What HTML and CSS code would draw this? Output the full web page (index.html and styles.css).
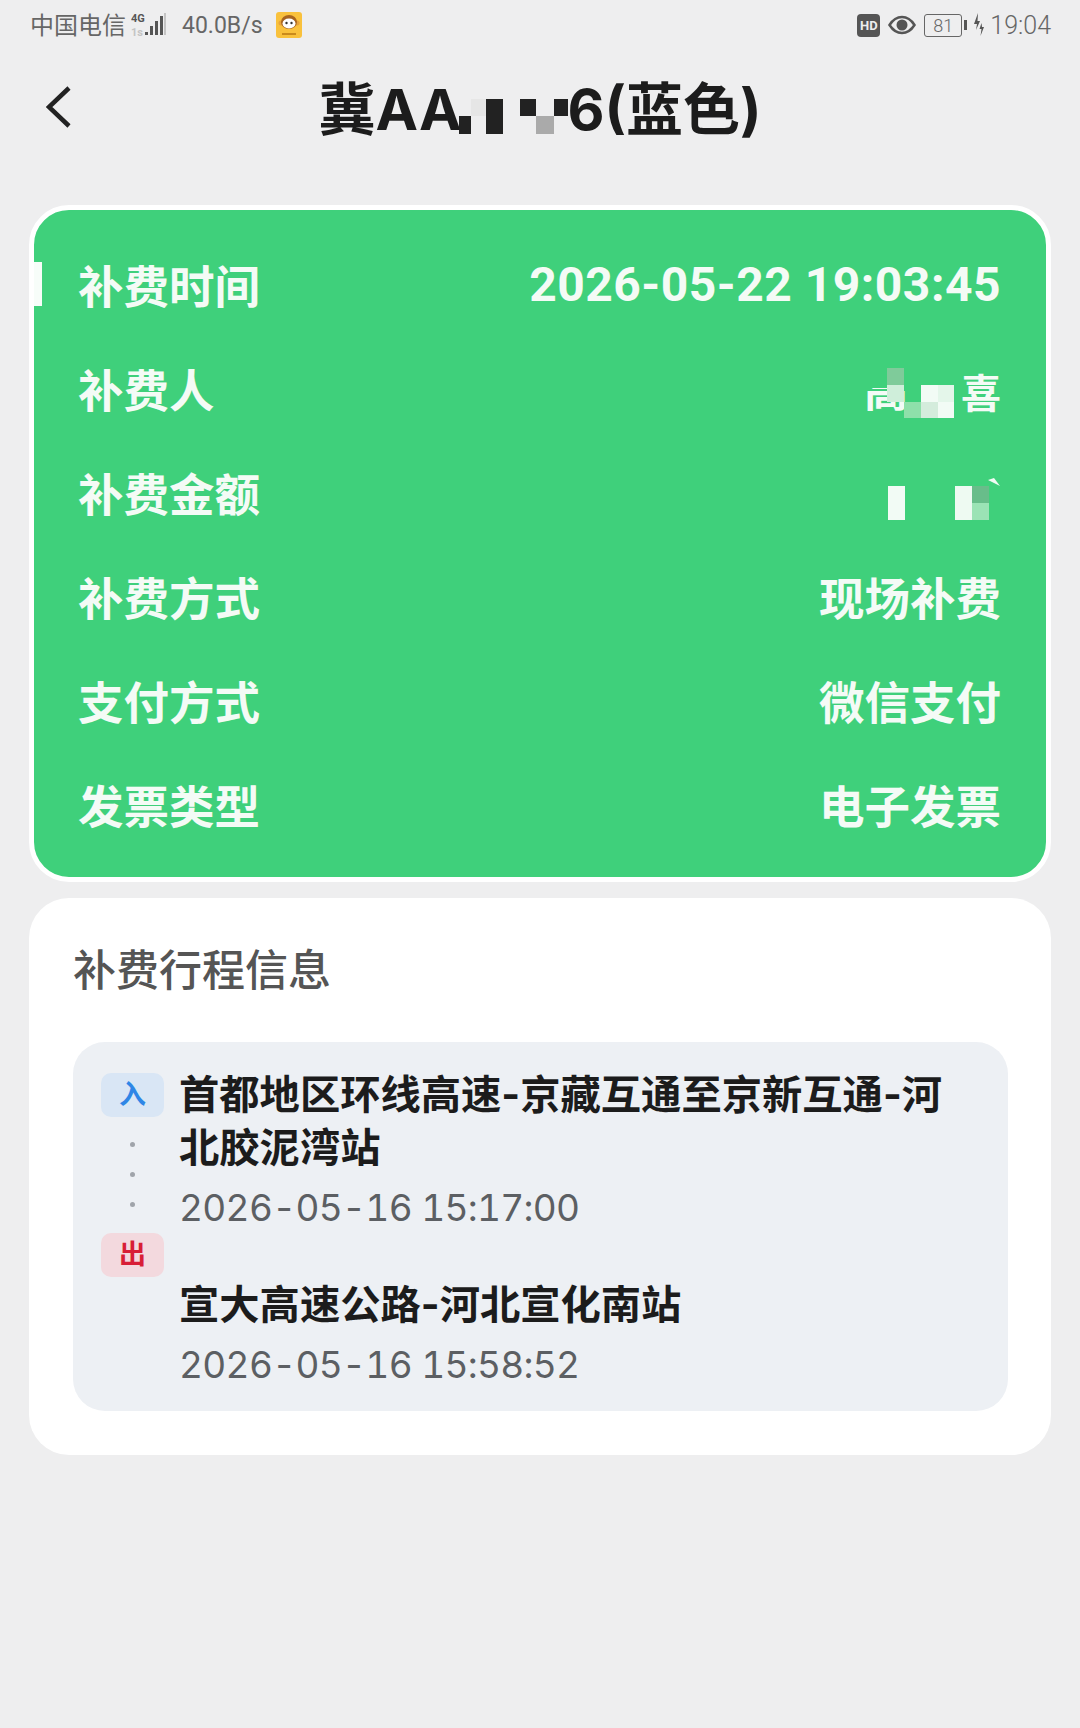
FILE: index.html
```html
<!DOCTYPE html>
<html lang="zh-CN">
<head>
    <meta charset="UTF-8">
    <title>补费详情</title>
    <link rel="stylesheet" href="styles.css">
</head>
<body>
<!-- 状态栏 -->
<div class="status-bar">
    <div class="status-left">
        <span class="carrier">中国电信</span>
        <svg class="signal" width="36" height="26" viewBox="0 0 36 26">
            <text x="0" y="10" class="net-label">4G</text>
            <text x="0" y="24" class="net-label net-off">1s</text>
            <rect x="14" y="20" width="3" height="3" fill="#555"/>
            <rect x="19" y="14" width="3" height="9" fill="#555"/>
            <rect x="24" y="9" width="3" height="14" fill="#555"/>
            <rect x="29" y="4" width="3" height="19" fill="#555"/>
            <rect x="33" y="1" width="2" height="22" fill="#c4c4c4"/>
        </svg>
        <span class="speed">40.0B/s</span>
        <svg class="app-icon" width="26" height="26" viewBox="0 0 26 26">
            <rect width="26" height="26" rx="3" fill="#f9c13c"/>
            <circle cx="5" cy="11" r="2.500" fill="#e8a33a"/>
            <circle cx="21" cy="11" r="2.500" fill="#e8a33a"/>
            <ellipse cx="13" cy="10" rx="8" ry="7" fill="#a8641e"/>
            <ellipse cx="13" cy="11.500" rx="6.500" ry="5" fill="#fff"/>
            <circle cx="10.500" cy="11" r="1.200" fill="#333"/>
            <circle cx="15.500" cy="11" r="1.200" fill="#333"/>
            <rect x="6" y="21" width="14" height="2" fill="#c98a1c"/>
        </svg>
    </div>
    <div class="status-right">
        <span class="hd-badge">HD</span>
        <svg width="28" height="20" viewBox="0 0 28 20">
            <path d="M1.500 10C5 4.500 9 2 14 2s9 2.500 12.500 8C23 15.500 19 18 14 18S5 15.500 1.500 10z" fill="none" stroke="#555" stroke-width="2.500"/>
            <circle cx="14" cy="10" r="5.500" fill="#555"/>
        </svg>
        <span class="battery">81</span>
        <span class="battery-tip"></span>
        <svg class="bolt" width="11" height="24" viewBox="0 0 11 24">
            <path d="M5 0L1 11h3L3 17l4-9H4.500z" fill="#555"/>
            <path d="M8.500 10l-2 6h2l-1 7 3.500-9H9z" fill="#555"/>
        </svg>
        <span class="clock">19:04</span>
    </div>
</div>

<!-- 标题 -->
<header class="title-bar">
    <svg class="btn-back" width="26" height="42" viewBox="0 0 26 42">
        <path d="M23 2L3 21l20 19" fill="none" stroke="#222" stroke-width="4.500"/>
    </svg>
    <h1 class="plate">
        <span>冀AA</span><svg class="plate-mask" width="109" height="35" viewBox="0 0 109 35">
            <rect x="0" y="17" width="12" height="18" fill="#222"/>
            <rect x="12" y="0" width="15" height="17" fill="#e6e6e6"/>
            <rect x="27" y="0" width="17" height="35" fill="#222"/>
            <rect x="61" y="0" width="16" height="17" fill="#222"/>
            <rect x="77" y="17" width="18" height="18" fill="#aaa"/>
            <rect x="95" y="0" width="14" height="17" fill="#222"/>
        </svg><span>6(蓝色)</span>
    </h1>
</header>

<main class="content">
    <!-- 补费信息 -->
    <section class="card-green">
        <span class="row-marker"></span>
        <div class="info-row">
            <span>补费时间</span>
            <span class="value-num">2026-05-22 19:03:45</span>
        </div>
        <div class="info-row">
            <span>补费人</span>
            <span class="masked-name">
                <span class="name-first">高</span>
                <svg class="name-mask" width="67" height="50" viewBox="0 0 67 50">
                    <rect x="0" y="0" width="17" height="17" fill="#7fcb9a"/>
                    <rect x="0" y="17" width="17" height="17" fill="#cfeeda"/>
                    <rect x="17" y="34" width="17" height="16" fill="#8fe0aa"/>
                    <rect x="34" y="17" width="17" height="17" fill="#f2fbf5"/>
                    <rect x="51" y="17" width="16" height="17" fill="#e4f6ea"/>
                    <rect x="34" y="34" width="17" height="16" fill="#d4ecdc"/>
                    <rect x="51" y="34" width="16" height="16" fill="#f2fbf5"/>
                </svg>
                <span class="name-last">喜</span>
            </span>
        </div>
        <div class="info-row">
            <span>补费金额</span>
            <svg class="amount-mask" width="113" height="42" viewBox="0 0 113 42">
                <rect x="0" y="8" width="17" height="34" fill="#f2fbf5"/>
                <rect x="67" y="8" width="17" height="34" fill="#eefaf2"/>
                <rect x="84" y="8" width="17" height="17" fill="#68bd8a"/>
                <rect x="84" y="25" width="17" height="17" fill="#9be3b5"/>
                <path d="M100 2l6-2 6 8z" fill="#f2fbf5"/>
            </svg>
        </div>
        <div class="info-row">
            <span>补费方式</span>
            <span>现场补费</span>
        </div>
        <div class="info-row">
            <span>支付方式</span>
            <span>微信支付</span>
        </div>
        <div class="info-row">
            <span>发票类型</span>
            <span>电子发票</span>
        </div>
    </section>

    <!-- 行程信息 -->
    <section class="card-white">
        <h2 class="card-title">补费行程信息</h2>
        <div class="trip-panel">
            <div class="trip-rail">
                <span class="badge badge-in">入</span>
                <span class="dot"></span>
                <span class="dot"></span>
                <span class="dot"></span>
                <span class="badge badge-out">出</span>
            </div>
            <div class="trip-text">
                <div class="stop-name">首都地区环线高速-京藏互通至京新互通-河北胶泥湾站</div>
                <div class="stop-time">2026-05-16 15:17:00</div>
                <div class="stop-name stop-second">宣大高速公路-河北宣化南站</div>
                <div class="stop-time">2026-05-16 15:58:52</div>
            </div>
        </div>
    </section>
</main>
</body>
</html>
```

FILE: styles.css
```css
/* General */
body {
    margin: 0;
    min-height: 1728px;
    background-color: #eeeeef;
    color: #1c1c1c;
    font-family: Roboto, "Noto Sans CJK SC", sans-serif;
}

/* Status bar */
.status-bar {
    display: flex;
    justify-content: space-between;
    align-items: center;
    height: 50px;
    padding: 0 29px 0 30px;
    color: #666;
    font-size: 23px;
}

.status-left,
.status-right {
    display: flex;
    align-items: center;
}

.carrier {
    margin-top: -3px;
    font-size: 24px;
}

.signal {
    margin-left: 5px;
}

.net-label {
    font-size: 11px;
    font-weight: bold;
    fill: #555;
}

.net-off {
    fill: #c4c4c4;
}

.speed {
    margin-left: 15px;
}

.app-icon {
    margin-left: 13px;
}

.hd-badge {
    width: 23px;
    height: 23px;
    margin-right: 8px;
    border-radius: 4px;
    background-color: #555;
    color: #eee;
    font-size: 13px;
    font-weight: bold;
    line-height: 23px;
    text-align: center;
}

.battery {
    width: 36px;
    height: 21px;
    margin-left: 8px;
    border: 1.5px solid #666;
    border-radius: 3px;
    font-size: 18px;
    font-weight: 300;
    line-height: 21px;
    text-align: center;
}

.battery-tip {
    width: 3px;
    height: 10px;
    margin-left: 2px;
    background-color: #555;
}

.bolt {
    margin-left: 6px;
}

.clock {
    margin-left: 6px;
    font-size: 25px;
    font-weight: 300;
}

/* Title */
.title-bar {
    position: relative;
    display: flex;
    justify-content: center;
    align-items: center;
    height: 120px;
}

.btn-back {
    position: absolute;
    left: 46px;
    top: 36px;
}

.plate {
    display: flex;
    align-items: center;
    margin: 0;
    font-family: Inter, "Noto Sans CJK SC", sans-serif;
    font-size: 57px;
    font-weight: bold;
    line-height: 70px;
}

.plate-mask {
    margin: 12px -1px 0 -2px;
}

/* Green card */
.content {
    padding: 35px 29px 0 29px;
}

.card-green {
    position: relative;
    padding: 22px 45px 21px 44px;
    border: 5px solid #fff;
    border-radius: 40px;
    background-color: #3fd07b;
    color: #f4fbf6;
    font-size: 45.500px;
    font-weight: bold;
}

.row-marker {
    position: absolute;
    left: 0;
    top: 52px;
    width: 8px;
    height: 44px;
    background-color: #f7fdf9;
}

.info-row {
    display: flex;
    justify-content: space-between;
    align-items: center;
    height: 104px;
}

.value-num {
    font-size: 48px;
    letter-spacing: 0.5px;
}

.masked-name {
    display: flex;
    align-items: center;
}

.name-first {
    position: relative;
    font-size: 44px;
}

/* 遮住字的上半部分 */
.name-first::after {
    content: "";
    position: absolute;
    left: 0;
    right: 0;
    top: 0;
    height: 32px;
    background-color: #3fd07b;
}

.name-mask {
    position: relative;
    margin: 10px 0 0 -21px;
}

.name-last {
    margin: 6px 0 0 7px;
    font-size: 40px;
}

.amount-mask {
    margin-top: 14px;
}

/* White card */
.card-white {
    margin-top: 16px;
    padding: 43px 43px 44px 44px;
    border-radius: 40px;
    background-color: #fff;
}

.card-title {
    margin: 0 0 41px;
    color: #555;
    font-size: 43px;
    font-weight: 500;
    line-height: 60px;
}

.trip-panel {
    display: flex;
    padding: 26px 40px 20px 28px;
    border-radius: 32px;
    background-color: #edf0f4;
}

.trip-rail {
    display: flex;
    flex-direction: column;
    align-items: center;
    flex: none;
    gap: 25px;
    width: 63px;
    padding-top: 5px;
}

.badge {
    width: 63px;
    height: 44px;
    border-radius: 10px;
    font-size: 27px;
    font-weight: bold;
    line-height: 44px;
    text-align: center;
}

.badge-in {
    background-color: #d9e6f5;
    color: #2f86e6;
}

.badge-out {
    margin-top: 1px;
    background-color: #f3d9de;
    color: #d81e36;
}

.dot {
    width: 5px;
    height: 5px;
    border-radius: 50%;
    background-color: #a0a4aa;
}

.trip-text {
    margin-left: 15px;
}

.stop-name {
    font-family: Inter, "Noto Sans CJK SC", sans-serif;
    font-size: 40.300px;
    font-weight: bold;
    line-height: 53px;
}

.stop-second {
    margin-top: 44px;
}

.stop-time {
    margin-top: 7px;
    color: #5c5f63;
    font-family: Inter, "Noto Sans CJK SC", sans-serif;
    font-size: 37px;
    font-variant-numeric: tabular-nums;
    letter-spacing: -0.7px;
    line-height: 53px;
}
```
